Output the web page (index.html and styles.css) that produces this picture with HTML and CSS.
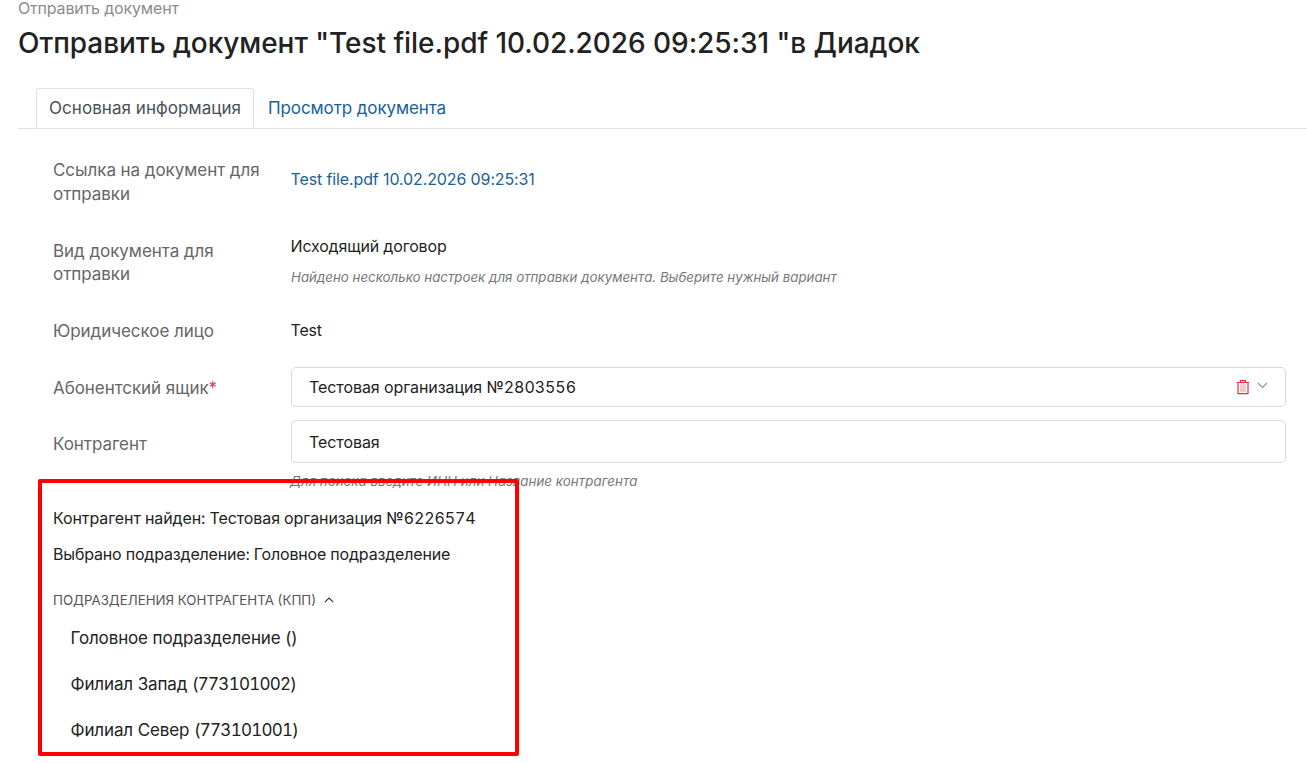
FILE: index.html
```html
<!DOCTYPE html>
<html lang="en">
<head>
    <meta charset="UTF-8">
    <meta name="viewport" content="width=device-width, initial-scale=1.0">
    <title>Отправить документ</title>
    <link rel="stylesheet" href="styles.css">
</head>
<body>
    <div class="breadcrumb">Отправить документ</div>
    <h1 class="page-title">Отправить документ "Test file.pdf 10.02.2026 09:25:31 "в Диадок</h1>

    <div class="tabs">
        <div class="tab active">Основная информация</div>
        <div class="tab">Просмотр документа</div>
    </div>

    <div class="form">
        <div class="form-row row-link">
            <div class="form-label">Ссылка на документ для отправки</div>
            <div class="form-value"><a class="link">Test file.pdf 10.02.2026 09:25:31</a></div>
        </div>
        <div class="form-row row-type">
            <div class="form-label">Вид документа для отправки</div>
            <div class="form-value">
                <div>Исходящий договор</div>
                <div class="hint hint-type">Найдено несколько настроек для отправки документа. Выберите нужный вариант</div>
            </div>
        </div>
        <div class="form-row row-org">
            <div class="form-label">Юридическое лицо</div>
            <div class="form-value">Test</div>
        </div>
        <div class="form-row row-box">
            <div class="form-label">Абонентский ящик<span class="required">*</span></div>
            <div class="field field-select">
                <span class="field-text">Тестовая организация №2803556</span>
                <svg class="icon-trash" width="16" height="16" viewBox="0 0 16 16" fill="none" stroke="#e5333f" stroke-width="1.2">
                    <path d="M6 5.5v7.5M8 5.5v7.5M10 5.5v7.5" stroke="#f2a0a6"/>
                    <path d="M1.8 3.5h12.4M5.5 3.5V1.6h5v1.9M3 3.5v11.2h10V3.5"/>
                </svg>
                <svg class="icon-chevron" width="11" height="7" viewBox="0 0 11 7" fill="none" stroke="#8f8f8f" stroke-width="1.1">
                    <path d="M1 1l4.5 4.5L10 1"/>
                </svg>
            </div>
        </div>
        <div class="form-row row-contractor">
            <div class="form-label">Контрагент</div>
            <div class="form-value">
                <div class="field"><span class="field-text">Тестовая</span></div>
                <div class="hint hint-contractor">Для поиска введите ИНН или Название контрагента</div>
            </div>
        </div>

        <div class="found">
            <div class="found-line org-line">Контрагент найден: Тестовая организация №6226574</div>
            <div class="found-line">Выбрано подразделение: Головное подразделение</div>
            <div class="section-title">
                ПОДРАЗДЕЛЕНИЯ КОНТРАГЕНТА (КПП)
                <svg width="10" height="6" viewBox="0 0 10 6" fill="none" stroke="#333" stroke-width="1.1"><path d="M.8 5.2L5 1l4.2 4.2"/></svg>
            </div>
            <div class="dept">Головное подразделение ()</div>
            <div class="dept">Филиал Запад <span class="kpp">(773101002)</span></div>
            <div class="dept">Филиал Север <span class="kpp">(773101001)</span></div>
        </div>
    </div>

    <div class="highlight-box"></div>
</body>
</html>
```

FILE: styles.css
```css
html, body {
    margin: 0;
    height: 763px;
    overflow: hidden;
}
body {
    position: relative;
    background: #fff;
    color: #1f1f1f;
    font-family: Inter, "Noto Sans", sans-serif;
    font-size: 16px;
    letter-spacing: -0.17px;
    padding: 0 0 0 18px;
    box-sizing: border-box;
}
.breadcrumb {
    color: #8c8c8c;
    font-size: 16px;
    line-height: 16px;
}
.page-title {
    margin: 9px 0 0;
    font-size: 28px;
    line-height: 36px;
    font-weight: 500;
    color: #222;
    letter-spacing: -0.05px;
}
.tabs {
    display: flex;
    margin-top: 27px;
    padding-left: 18px;
    border-bottom: 1px solid #dde2e8;
    height: 40px;
}
.tab {
    padding: 0 13px;
    font-size: 17px;
    letter-spacing: -0.1px;
    line-height: 39px;
    color: #1a6196;
    border: 1px solid transparent;
}
.tab.active {
    color: #495057;
    background: #fff;
    border-color: #dde2e8;
    border-bottom-color: #fff;
    border-radius: 3px 3px 0 0;
    height: 40px;
    box-sizing: border-box;
    letter-spacing: 0.05px;
    padding-left: 12px;
    padding-right: 12px;
}
.form {
    padding: 0 21px 0 35px;
}
.form-row {
    display: grid;
    grid-template-columns: 237.5px 1fr;
}
.form-label {
    color: #666;
    font-size: 17px;
    letter-spacing: -0.05px;
    line-height: 24px;
    width: 215px;
}
.form-value {
    color: #1f1f1f;
    line-height: 24px;
}
.row-link {
    margin-top: 29px;
}
.row-link .form-label {
    padding-top: 1px;
    line-height: 23.5px;
}
.row-link .form-value {
    padding-top: 9px;
}
.link {
    color: #1a6196;
    letter-spacing: -0.12px;
}
.row-type {
    margin-top: 28.5px;
}
.row-type .form-label {
    padding-top: 5px;
    line-height: 23.5px;
}
.row-type .form-value {
    margin-top: -1px;
}
.row-org {
    margin-top: 31.5px;
}
.row-org .form-label {
    padding-top: 1px;
}
.row-box {
    margin-top: 24px;
    align-items: center;
}
.row-box .form-label {
    padding-top: 1px;
}
.row-contractor {
    margin-top: 13px;
}
.row-contractor .form-label {
    padding-top: 12px;
}
.hint {
    color: #777;
    font-size: 13.3px;
    font-style: italic;
    letter-spacing: 0;
    line-height: 16px;
}
.hint-type {
    margin: 11px 0 0 0.5px;
}
.hint-contractor {
    margin: 10px 0 0 -0.5px;
    letter-spacing: 0.04px;
}
.field {
    display: flex;
    align-items: center;
    margin-left: 0.5px;
    border: 1px solid #d9d9d9;
    border-radius: 5px;
    padding: 0 17px;
    height: 43px;
    box-sizing: border-box;
}
.field-select {
    height: 40px;
}
.field-text {
    flex: 1;
    color: #222;
    font-feature-settings: "tnum";
    letter-spacing: -0.07px;
}
.icon-trash {
    margin-right: 6px;
}
.icon-chevron {
    margin-bottom: 4px;
}
.required {
    color: #e5333f;
}
.found {
    margin-top: 17px;
}
.found-line {
    line-height: 24px;
    margin-bottom: 12px;
    color: #222;
    font-feature-settings: "tnum";
}
.org-line {
    letter-spacing: -0.1px;
}
.section-title {
    display: flex;
    align-items: center;
    gap: 8px;
    margin-top: 24px;
    font-size: 13.3px;
    letter-spacing: 0;
    line-height: 20px;
    color: #555;
}
.dept {
    padding-left: 17.5px;
    font-size: 17px;
    letter-spacing: -0.13px;
    line-height: 24px;
    margin-top: 22px;
    color: #222;
}
.section-title + .dept {
    margin-top: 16px;
}
.kpp {
    font-feature-settings: "tnum";
    letter-spacing: -0.75px;
}
.highlight-box {
    position: absolute;
    left: 38px;
    top: 479px;
    width: 481px;
    height: 277px;
    box-sizing: border-box;
    border: 4px solid #fe0000;
    border-radius: 2px;
}
```
